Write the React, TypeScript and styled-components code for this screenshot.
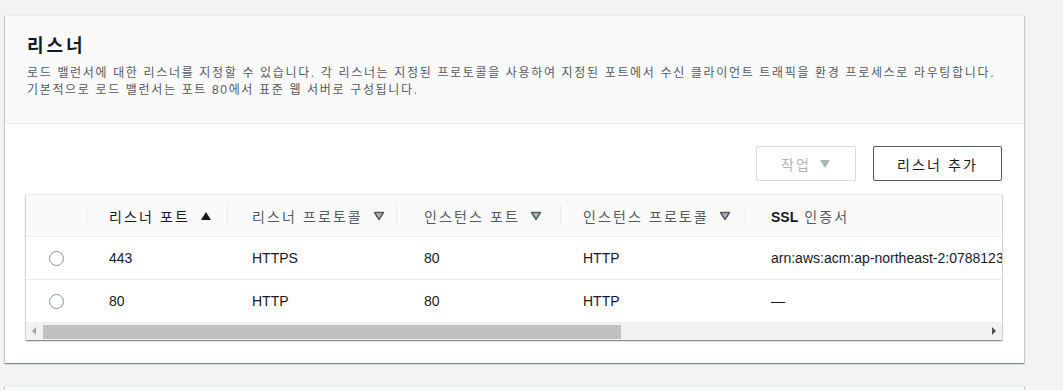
import React from "react";
import styled, { createGlobalStyle } from "styled-components";

const GlobalStyle = createGlobalStyle`
  html, body { margin: 0; padding: 0; background: #f2f3f3; overflow: hidden; }
  body { font-family: "Liberation Sans", "Noto Sans CJK KR", sans-serif; color: #16191f; }
`;

const Page = styled.div`
  height: 390px;
  overflow: hidden;
  box-sizing: border-box;
  padding: 15px 39px 0 5px;
  display: flex;
  flex-direction: column;
  gap: 23px;
`;

const Card = styled.section<{ $h?: number }>`
  flex-shrink: 0;
  background: #fff;
  ${(p) => (p.$h ? `height: ${p.$h}px;` : "")}
  box-shadow: 0 1px 1px 0 rgba(0, 28, 36, 0.3), 1px 1px 1px 0 rgba(0, 28, 36, 0.15),
    -1px 1px 1px 0 rgba(0, 28, 36, 0.15);
  border-top: 1px solid #eaeded;
`;

const CardHeader = styled.header`
  background: #fafafa;
  border-bottom: 1px solid #eaeded;
  padding: 17px 22px 24px;
`;

const Title = styled.h2`
  margin: 0;
  font-size: 18px;
  line-height: 26px;
  font-weight: 700;
  letter-spacing: 0.16em;
  color: #16191f;
`;

const Desc = styled.p`
  margin: 6px 0 0;
  font-size: 12px;
  line-height: 17px;
  letter-spacing: 0.138em;
  color: #545b64;
`;

const CardBody = styled.div`
  padding: 22px 22px 23px 21px;
`;

const Actions = styled.div`
  display: flex;
  justify-content: flex-end;
  gap: 17px;
  margin-bottom: 13px;
`;

const Button = styled.button<{ $disabled?: boolean; $w: number }>`
  width: ${(p) => p.$w}px;
  height: 35px;
  box-sizing: border-box;
  padding: 0;
  display: inline-flex;
  align-items: center;
  justify-content: center;
  gap: 8px;
  background: #fff;
  border-radius: 2px;
  font-family: inherit;
  font-size: 14px;
  letter-spacing: 0.15em;
  border: 1px solid ${(p) => (p.$disabled ? "#d5dbdb" : "#545b64")};
  color: ${(p) => (p.$disabled ? "#aab7b8" : "#16191f")};
  cursor: ${(p) => (p.$disabled ? "default" : "pointer")};
`;

const TableWrap = styled.div`
  background: #fff;
  box-shadow: 0 1px 1px 0 rgba(0, 28, 36, 0.3), 1px 1px 1px 0 rgba(0, 28, 36, 0.15),
    -1px 1px 1px 0 rgba(0, 28, 36, 0.15);
  border-top: 1px solid #eaeded;
`;

const TableViewport = styled.div`
  overflow: hidden;
`;

const Table = styled.table`
  width: 1584px;
  table-layout: fixed;
  border-collapse: collapse;
`;

const Th = styled.th<{ $sorted?: boolean; $sep?: boolean; $pad: number }>`
  position: relative;
  height: 41px;
  padding: 0 0 0 ${(p) => p.$pad}px;
  background: #fafafa;
  text-align: left;
  font-weight: 400;
  font-size: 14px;
  letter-spacing: 0.15em;
  color: ${(p) => (p.$sorted ? "#16191f" : "#545b64")};
  white-space: nowrap;
  &::before {
    content: "";
    display: ${(p) => (p.$sep ? "block" : "none")};
    position: absolute;
    left: 0;
    top: 10px;
    bottom: 10px;
    width: 1px;
    background: #eaeded;
  }
`;

const HeadInner = styled.span`
  display: inline-flex;
  align-items: center;
  gap: 10px;
`;

const Strong = styled.span`
  font-weight: 700;
  letter-spacing: 0;
  color: #16191f;
`;

const Td = styled.td<{ $pad: number }>`
  height: 42px;
  padding: 0 0 0 ${(p) => p.$pad}px;
  border-top: 1px solid #eaeded;
  font-size: 14px;
  color: #16191f;
  white-space: nowrap;
  overflow: hidden;
`;

const Radio = styled.span`
  display: block;
  width: 15px;
  height: 15px;
  box-sizing: border-box;
  border-radius: 50%;
  border: 1px solid #879596;
  background: #fff;
`;

const ScrollBar = styled.div`
  display: flex;
  height: 18px;
  background: #f1f1f1;
`;

const ScrollArrow = styled.div`
  width: 17px;
  flex-shrink: 0;
  display: flex;
  align-items: center;
  justify-content: center;
`;

const ScrollTrack = styled.div`
  flex: 1;
  display: flex;
`;

const ScrollThumb = styled.div`
  margin: 3px 0 1px;
  background: #c1c1c1;
`;

const SortUp = () => (
  <svg width="12" height="10" viewBox="0 0 12 10">
    <path d="M6 1 L11 9 L1 9 Z" fill="#16191f" />
  </svg>
);

const SortNone = () => (
  <svg width="12" height="10" viewBox="0 0 12 10">
    <path d="M1.5 1.5 L10.5 1.5 L6 8.5 Z" fill="#aab7b8" stroke="#545b64" strokeWidth="1.4" strokeLinejoin="round" />
  </svg>
);

const Caret = () => (
  <svg width="12" height="10" viewBox="0 0 12 10">
    <path d="M1 1 L11 1 L6 9 Z" fill="#aab7b8" />
  </svg>
);

const ArrowLeft = () => (
  <svg width="5" height="8" viewBox="0 0 5 8">
    <path d="M4 0 L4 8 L0 4 Z" fill="#a3a3a3" />
  </svg>
);

const ArrowRight = () => (
  <svg width="5" height="8" viewBox="0 0 5 8">
    <path d="M1 0 L1 8 L5 4 Z" fill="#505050" />
  </svg>
);

const cols = [
  { w: 60, pad: 23 },
  { w: 141, pad: 23 },
  { w: 169, pad: 25 },
  { w: 164, pad: 28 },
  { w: 185, pad: 23 },
  { w: 0, pad: 26 },
];

const rows = [
  { port: "443", proto: "HTTPS", iport: "80", iproto: "HTTP", ssl: "arn:aws:acm:ap-northeast-2:078812345678:certificate/3f1a9c2e-7b44-4d1e-9a0b-5c6d7e8f9a0b" },
  { port: "80", proto: "HTTP", iport: "80", iproto: "HTTP", ssl: "—" },
];

export default function App() {
  const visible = 974;
  const content = 1584;
  const track = visible - 34;
  const thumb = Math.round((track * visible) / content);
  return (
    <>
      <GlobalStyle />
      <Page>
        <Card>
          <CardHeader>
            <Title>리스너</Title>
            <Desc>
              로드 밸런서에 대한 리스너를 지정할 수 있습니다. 각 리스너는 지정된 프로토콜을 사용하여 지정된 포트에서 수신 클라이언트 트래픽을 환경 프로세스로 라우팅합니다.
              <br />
              기본적으로 로드 밸런서는 포트 80에서 표준 웹 서버로 구성됩니다.
            </Desc>
          </CardHeader>
          <CardBody>
            <Actions>
              <Button $disabled $w={100}>
                작업 <Caret />
              </Button>
              <Button $w={129}>리스너 추가</Button>
            </Actions>
            <TableWrap>
              <TableViewport>
                <Table>
                  <colgroup>
                    {cols.map((c, i) => (
                      <col key={i} style={c.w ? { width: c.w } : undefined} />
                    ))}
                  </colgroup>
                  <thead>
                    <tr>
                      <Th $pad={0} />
                      <Th $sep $sorted $pad={cols[1].pad}>
                        <HeadInner>
                          리스너 포트 <SortUp />
                        </HeadInner>
                      </Th>
                      <Th $sep $pad={cols[2].pad}>
                        <HeadInner>
                          리스너 프로토콜 <SortNone />
                        </HeadInner>
                      </Th>
                      <Th $sep $pad={cols[3].pad}>
                        <HeadInner>
                          인스턴스 포트 <SortNone />
                        </HeadInner>
                      </Th>
                      <Th $sep $pad={cols[4].pad}>
                        <HeadInner>
                          인스턴스 프로토콜 <SortNone />
                        </HeadInner>
                      </Th>
                      <Th $sep $pad={cols[5].pad}>
                        <Strong>SSL</Strong> 인증서
                      </Th>
                    </tr>
                  </thead>
                  <tbody>
                    {rows.map((r) => (
                      <tr key={r.port}>
                        <Td $pad={cols[0].pad}>
                          <Radio />
                        </Td>
                        <Td $pad={cols[1].pad}>{r.port}</Td>
                        <Td $pad={cols[2].pad}>{r.proto}</Td>
                        <Td $pad={cols[3].pad}>{r.iport}</Td>
                        <Td $pad={cols[4].pad}>{r.iproto}</Td>
                        <Td $pad={cols[5].pad}>{r.ssl}</Td>
                      </tr>
                    ))}
                  </tbody>
                </Table>
              </TableViewport>
              <ScrollBar>
                <ScrollArrow>
                  <ArrowLeft />
                </ScrollArrow>
                <ScrollTrack>
                  <ScrollThumb style={{ width: thumb }} />
                </ScrollTrack>
                <ScrollArrow>
                  <ArrowRight />
                </ScrollArrow>
              </ScrollBar>
            </TableWrap>
          </CardBody>
        </Card>
        <Card $h={80}>
          <CardHeader />
        </Card>
      </Page>
    </>
  );
}
